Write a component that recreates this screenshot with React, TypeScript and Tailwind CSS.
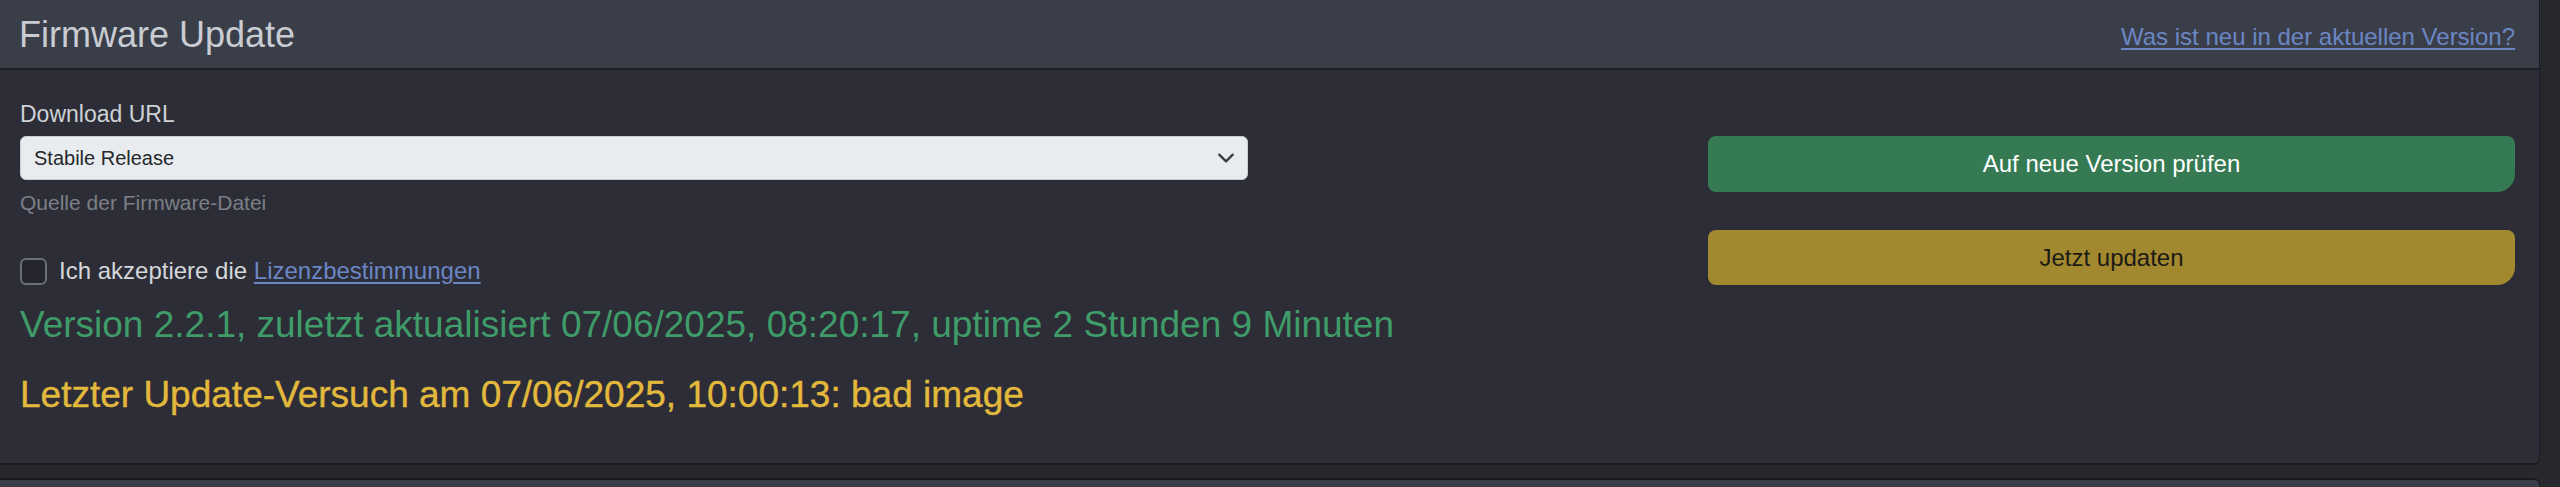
import { useState } from 'react'

export default function App() {
  const [accepted, setAccepted] = useState(false)
  const [source, setSource] = useState('stable')

  return (
    <div
      className="w-[2560px] h-[487px] overflow-hidden bg-[#26282c] pr-[20px]"
      style={{ fontFamily: '"Liberation Sans", Arial, sans-serif' }}
    >
      {/* Firmware card */}
      <div className="bg-[#2c2d36] border-r border-b-2 border-[#1b1c21] rounded-br-[6px]">
        {/* Header */}
        <div className="h-[70px] bg-[#3a3e49] border-b-2 border-[#1f2026] flex items-center justify-between pl-[19px] pr-[24px]">
          <h3 className="text-[36px] leading-none text-[#c9ccd3] mt-[2px]">Firmware Update</h3>
          <a href="#" className="text-[24px] text-[#6b86c4] underline underline-offset-[3px] mt-[6px]">
            Was ist neu in der aktuellen Version?
          </a>
        </div>

        {/* Body */}
        <div className="pl-[20px] pr-[24px] pt-[26px] pb-[46px]">
          <div className="flex">
            <div className="w-[1228px]">
              <label className="block text-[23px] leading-[36px] text-[#cfd2d7] mb-[4px]">Download URL</label>
              <div className="relative">
                <select
                  value={source}
                  onChange={(e) => setSource(e.target.value)}
                  className="w-full h-[44px] appearance-none rounded-[6px] bg-[#e9ecef] border border-[#c9ced4] pl-[13px] text-[20px] text-[#25282c] outline-none"
                >
                  <option value="stable">Stabile Release</option>
                  <option value="beta">Beta Release</option>
                </select>
                <svg
                  className="absolute right-[13px] top-1/2 -translate-y-1/2 pointer-events-none"
                  width="18"
                  height="18"
                  viewBox="0 0 16 16"
                  fill="none"
                  stroke="#343a40"
                  strokeWidth="2"
                  strokeLinecap="round"
                  strokeLinejoin="round"
                >
                  <path d="M2 5l6 6 6-6" />
                </svg>
              </div>
              <div className="mt-[7px] text-[21px] leading-[32px] text-[#7b7f88]">Quelle der Firmware-Datei</div>

              <div className="mt-[34px] flex items-center gap-[12px] h-[36px]">
                <input
                  type="checkbox"
                  checked={accepted}
                  onChange={(e) => setAccepted(e.target.checked)}
                  className="appearance-none w-[27px] h-[27px] rounded-[6px] border-2 border-[#6c6f77] bg-[#24252d] checked:bg-[#3b6fd4]"
                />
                <span className="text-[24px] text-[#d5d7db]">
                  Ich akzeptiere die{' '}
                  <a href="#" className="text-[#6b86c4] underline underline-offset-[3px]">
                    Lizenzbestimmungen
                  </a>
                </span>
              </div>
            </div>

            <div className="ml-auto w-[807px] pt-[40px] flex flex-col gap-[38px]">
              <button className="h-[56px] rounded-[8px] rounded-br-[18px] bg-[#357a53] text-[24px] text-white">
                Auf neue Version prüfen
              </button>
              <button className="h-[55px] rounded-[8px] rounded-br-[18px] bg-[#a2882f] text-[24px] text-[#1c1a14]">
                Jetzt updaten
              </button>
            </div>
          </div>

          <div className="mt-[14px] text-[37px] leading-[44px] text-[#3f9c69]">
            Version 2.2.1, zuletzt aktualisiert 07/06/2025, 08:20:17, uptime 2 Stunden 9 Minuten
          </div>
          <div className="mt-[26px] text-[37px] leading-[44px] text-[#e2b93c] [-webkit-text-stroke:0.4px_#e2b93c]">
            Letzter Update-Versuch am 07/06/2025, 10:00:13: bad image
          </div>
        </div>
      </div>

      {/* Next card (partly visible) */}
      <div className="mt-[13px] h-[40px] bg-[#3a3e49] border-t-2 border-r border-[#1b1c21] rounded-tr-[6px]" />
    </div>
  )
}
